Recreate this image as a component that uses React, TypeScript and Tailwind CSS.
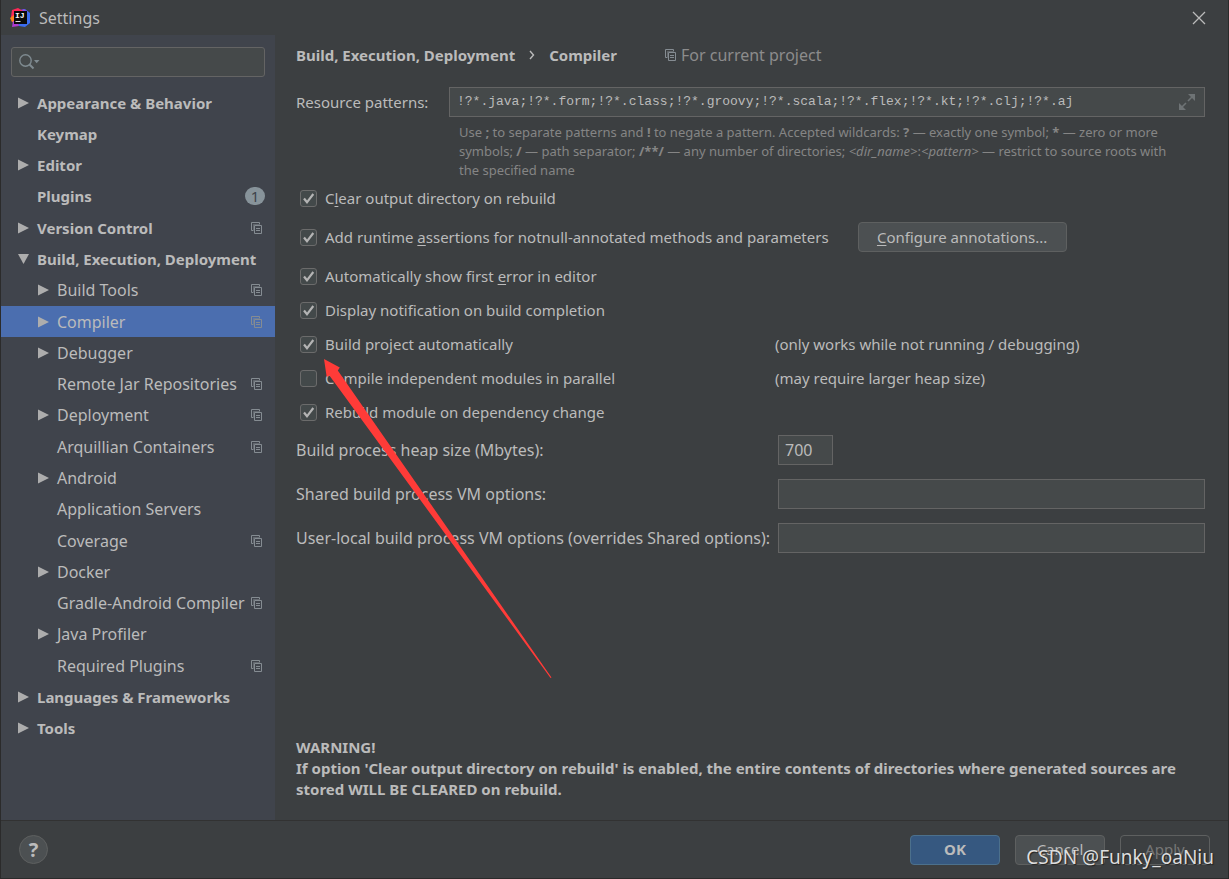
import { useState } from 'react';
import clsx from 'clsx';

type TreeItem = {
  label: string;
  level?: number;
  arrow?: 'right' | 'down';
  project?: boolean;
  badge?: number;
};

const TREE: TreeItem[] = [
  { label: 'Appearance & Behavior', arrow: 'right' },
  { label: 'Keymap' },
  { label: 'Editor', arrow: 'right' },
  { label: 'Plugins', badge: 1 },
  { label: 'Version Control', arrow: 'right', project: true },
  { label: 'Build, Execution, Deployment', arrow: 'down' },
  { label: 'Build Tools', level: 1, arrow: 'right', project: true },
  { label: 'Compiler', level: 1, arrow: 'right', project: true },
  { label: 'Debugger', level: 1, arrow: 'right' },
  { label: 'Remote Jar Repositories', level: 1, project: true },
  { label: 'Deployment', level: 1, arrow: 'right', project: true },
  { label: 'Arquillian Containers', level: 1, project: true },
  { label: 'Android', level: 1, arrow: 'right' },
  { label: 'Application Servers', level: 1 },
  { label: 'Coverage', level: 1, project: true },
  { label: 'Docker', level: 1, arrow: 'right' },
  { label: 'Gradle-Android Compiler', level: 1, project: true },
  { label: 'Java Profiler', level: 1, arrow: 'right' },
  { label: 'Required Plugins', level: 1, project: true },
  { label: 'Languages & Frameworks', arrow: 'right' },
  { label: 'Tools', arrow: 'right' },
];

const PATTERNS = '!?*.java;!?*.form;!?*.class;!?*.groovy;!?*.scala;!?*.flex;!?*.kt;!?*.clj;!?*.aj';

function ProjectIcon() {
  return (
    <svg width="12" height="12" viewBox="0 0 12 12" fill="none" stroke="#858c92" className="shrink-0">
      <path d="M2.5 8.5H.5V.5h8V2.5" />
      <path d="M2.5 8V2.5H8" strokeOpacity="0.5" />
      <path d="M3.5 3.5h7v8h-7z" />
      <path d="M5 6.5h4M5 8.5h4" />
    </svg>
  );
}

function Arrow({ dir }: { dir?: 'right' | 'down' }) {
  return (
    <svg width="12" height="12" viewBox="0 0 12 12" fill="#adadad" className="mr-2 shrink-0">
      {dir === 'right' && <path d="M1 0.5L12 6L1 11.5z" />}
      {dir === 'down' && <path d="M1 1H12L6.5 11z" />}
    </svg>
  );
}

function Logo() {
  return (
    <svg width="21" height="20" viewBox="0 0 21 20">
      <path d="M11 3L15 1L20 5L20 15L15 19L9 18L7 13z" fill="#3b6df0" />
      <path d="M10 2L14 1L18 4L14 7z" fill="#8b4be8" />
      <path d="M2 2L8 0L13 3L10 11L1 9z" fill="#fe2857" />
      <path d="M0 10L4 7L5 15L2 14z" fill="#fc801d" />
      <path d="M3 13L8 14L9 18L2 19z" fill="#af3bd0" />
      <path d="M4 3h13v13H4z" fill="#0a0a0a" />
      <path d="M5.5 13.5h5" stroke="#ddd" />
      <text x="5" y="10" fill="#fff" fontSize="8" fontWeight="700" fontFamily="Liberation Mono, monospace">IJ</text>
    </svg>
  );
}

function CheckRow({ id, label, mnemonic, checked, children }: {
  id: string;
  label: string;
  mnemonic?: number;
  checked?: boolean;
  children?: React.ReactNode;
}) {
  const [on, setOn] = useState(!!checked);
  return (
    <div className="flex items-center">
      <span className="relative ml-1 mr-2 flex size-[17px] shrink-0">
        <input
          id={id}
          type="checkbox"
          checked={on}
          onChange={e => setOn(e.target.checked)}
          className="size-full appearance-none rounded-[3px] border border-[#6b6b6b] bg-[#43494a]"
        />
        {on && (
          <svg viewBox="0 0 17 17" fill="none" stroke="#b4b4b4" strokeWidth="2.2" className="pointer-events-none absolute inset-0">
            <path d="M4 8.5L7 12.3L13.3 4" />
          </svg>
        )}
      </span>
      <label htmlFor={id} className="leading-5">
        {mnemonic === undefined ? label : (
          <>
            {label.slice(0, mnemonic)}
            <span className="underline underline-offset-2">{label[mnemonic]}</span>
            {label.slice(mnemonic + 1)}
          </>
        )}
      </label>
      {children}
    </div>
  );
}

export default function App() {
  const [selected, setSelected] = useState('Compiler');

  return (
    <div className="relative flex min-h-screen flex-col overflow-hidden border-x border-b border-[#2b2b2b] bg-[#3c3f41] font-['Noto_Sans',sans-serif] text-[15px] text-[#bbbbbb]">
      <header className="flex h-[35px] items-center gap-2 pl-[9px] pr-[22px]">
        <Logo />
        <h1 className="flex-1 text-base">Settings</h1>
        <button aria-label="Close">
          <svg width="14" height="14" viewBox="0 0 14 14" stroke="#bbbbbb" strokeWidth="1.3">
            <path d="M1 1L13 13M13 1L1 13" />
          </svg>
        </button>
      </header>

      <div className="flex flex-1">
        {/* tree */}
        <nav className="flex w-[274px] shrink-0 flex-col bg-[#40444c] pb-[76px] pt-3">
          <div className="mx-[10px] mb-[10px] flex h-[30px] items-center rounded-[3px] border border-[#646464] bg-[#45494a] pl-[7px]">
            <svg width="21" height="16" viewBox="0 0 21 16" fill="none" stroke="#7f8b91" strokeWidth="1.4">
              <circle cx="6.5" cy="6.5" r="5.7" />
              <path d="M10.5 10.5L14.5 14.5" strokeWidth="2" />
              <path d="M15 6H20.5L17.7 9.2z" fill="#7f8b91" stroke="none" />
            </svg>
            <input aria-label="Search settings" className="min-w-0 flex-1 bg-transparent outline-none" />
          </div>
          <ul className="grid flex-1 auto-rows-fr grid-cols-1">
            {TREE.map(item => (
              <li key={item.label} className="flex">
                <button
                  onClick={() => setSelected(item.label)}
                  className={clsx(
                    'flex min-w-0 flex-1 items-center pr-3 text-left leading-5 whitespace-nowrap',
                    item.level ? 'pl-9 text-base leading-5' : 'pl-4 font-bold',
                    selected === item.label && 'bg-[#4b6eaf]'
                  )}
                >
                  <Arrow dir={item.arrow} />
                  <span className="min-w-0 flex-1">{item.label}</span>
                  {item.project && <ProjectIcon />}
                  {item.badge && (
                    <span className="-mr-[2px] flex h-[18px] w-5 items-center justify-center rounded-full bg-[#87939a] font-normal text-[#3f434b]">
                      {item.badge}
                    </span>
                  )}
                </button>
              </li>
            ))}
          </ul>
        </nav>

        {/* compiler page */}
        <main className="flex min-w-0 flex-1 flex-col pb-5 pl-[21px] pr-[23px] pt-[10px]">
          <div className="flex h-5 items-center">
            <h2 className="flex items-center gap-[14px] font-bold">
              Build, Execution, Deployment
              <svg width="6" height="10" viewBox="0 0 6 10" fill="none" stroke="#bbbbbb" strokeWidth="1.4">
                <path d="M1 1L4.5 5L1 9" />
              </svg>
              Compiler
            </h2>
            <span className="ml-12 flex items-center gap-1 text-base leading-5 text-[#8c8c8c]">
              <ProjectIcon />
              For current project
            </span>
          </div>

          <div className="mt-[22px] flex items-center">
            <label htmlFor="patterns" className="w-[153px] shrink-0">Resource patterns:</label>
            <div className="flex h-[30px] flex-1 items-center border border-[#646464] bg-[#45494a] pl-[7px] pr-[9px]">
              <input
                id="patterns"
                defaultValue={PATTERNS}
                className="min-w-0 flex-1 bg-transparent font-['Liberation_Mono',monospace] text-[13px] outline-none"
              />
              <button aria-label="Expand">
                <svg width="16" height="16" viewBox="0 0 16 16" fill="#6e7375" stroke="#6e7375" strokeWidth="1.6">
                  <path d="M9 0H16V7z" stroke="none" />
                  <path d="M0 9V16H7z" stroke="none" />
                  <path d="M9 7L13 3M7 9L3 13" />
                </svg>
              </button>
            </div>
          </div>
          <p className="ml-[163px] mr-4 mt-[6px] text-[13px] leading-[19px] text-[#858585]">
            Use <b>;</b> to separate patterns and <b>!</b> to negate a pattern. Accepted wildcards: <b>?</b> — exactly one symbol; <b>*</b> — zero or more
            symbols; <b>/</b> — path separator; <b>/**/</b> — any number of directories; <i>&lt;dir_name&gt;</i>:<i>&lt;pattern&gt;</i> — restrict to source roots with
            the specified name
          </p>

          <div className="mt-2 flex flex-col gap-[14px]">
            <CheckRow id="clear" label="Clear output directory on rebuild" mnemonic={1} checked />
            <CheckRow id="asserts" label="Add runtime assertions for notnull-annotated methods and parameters" mnemonic={12} checked>
              <button className="ml-[29px] h-[30px] w-[209px] rounded border border-[#5e6060] bg-[#4c5052]">
                <span className="underline underline-offset-2">C</span>onfigure annotations...
              </button>
            </CheckRow>
            <CheckRow id="first-error" label="Automatically show first error in editor" mnemonic={25} checked />
            <CheckRow id="notify" label="Display notification on build completion" checked />
            <div className="grid grid-cols-[479px_1fr]">
              <CheckRow id="auto" label="Build project automatically" checked />
              <span className="leading-5">(only works while not running / debugging)</span>
            </div>
            <div className="grid grid-cols-[479px_1fr]">
              <CheckRow id="parallel" label="Compile independent modules in parallel" />
              <span className="leading-5">(may require larger heap size)</span>
            </div>
            <CheckRow id="rebuild" label="Rebuild module on dependency change" checked />
          </div>

          <div className="mt-[13px] grid grid-cols-[482px_1fr] items-center gap-y-[14px] text-base">
            <label htmlFor="heap">Build process heap size (Mbytes):</label>
            <input id="heap" defaultValue="700" className="h-[30px] w-[55px] border border-[#646464] bg-[#45494a] px-[6px]" />
            <label htmlFor="shared">Shared build process VM options:</label>
            <input id="shared" className="h-[30px] border border-[#646464] bg-[#45494a] px-[6px]" />
            <label htmlFor="local">User-local build process VM options (overrides Shared options):</label>
            <input id="local" className="h-[30px] border border-[#646464] bg-[#45494a] px-[6px]" />
          </div>

          <p className="mt-auto font-bold leading-[21px]">
            WARNING!
            <br />
            If option 'Clear output directory on rebuild' is enabled, the entire contents of directories where generated sources are stored WILL BE CLEARED on rebuild.
          </p>
        </main>
      </div>

      <footer className="flex h-[58px] items-center border-t border-[#323232] px-[18px]">
        <button aria-label="Help" className="flex size-[29px] items-center justify-center rounded-full border border-[#5e6060] bg-[#4c5052] text-xl font-bold">
          ?
        </button>
        <div className="ml-auto flex gap-[15px]">
          <button className="h-[30px] w-[90px] rounded border border-[#4c708c] bg-[#365880] font-bold">OK</button>
          <button className="h-[30px] w-[90px] rounded border border-[#5e6060] bg-[#4c5052]">Cancel</button>
          <button disabled className="h-[30px] w-[90px] rounded border border-[#5e6060] text-[#777777]">Apply</button>
        </div>
      </footer>

      {/* red pointer drawn over the page */}
      <svg width="230" height="322" viewBox="0 0 230 322" fill="#ff3b38" className="pointer-events-none absolute left-[321px] top-[358px]">
        <path d="M2 1L17.8 9.6L15.8 12.6L229.5 319.5L228.5 320L7.4 17.6L4.7 19z" />
      </svg>
      <span className="pointer-events-none absolute bottom-[7px] right-[14px] text-[19px] text-[#dddddd] [text-shadow:1px_1px_1px_#222]">
        CSDN @Funky_oaNiu
      </span>
    </div>
  );
}
